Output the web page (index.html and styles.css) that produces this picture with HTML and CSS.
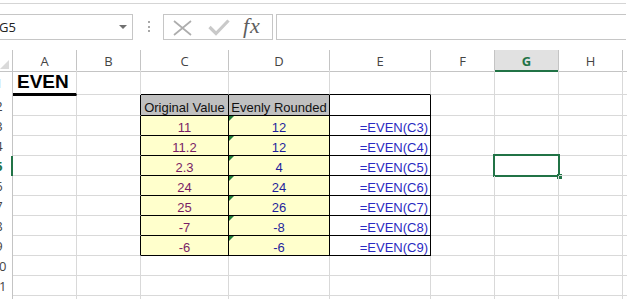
FILE: index.html
```html
<!DOCTYPE html>
<html lang="en">

<head>
    <meta charset="UTF-8" />
    <title>EVEN - Excel</title>
    <link rel="stylesheet" href="styles.css">
</head>

<body>
    <div class="ribbon-edge"></div>

    <!-- name box + formula bar -->
    <div class="formula-bar">
        <div class="name-box">
            <span class="name-ref">G5</span>
            <span class="name-arrow"></span>
        </div>
        <div class="grip">
            <svg width="3" height="12" viewBox="0 0 3 12">
                <rect x="0" y="0" width="2" height="2" fill="#a8a8a8" />
                <rect x="0" y="5" width="2" height="2" fill="#a8a8a8" />
                <rect x="0" y="9" width="2" height="2" fill="#a8a8a8" />
            </svg>
        </div>
        <div class="fx-buttons">
            <svg class="btn-cancel" width="19" height="16" viewBox="0 0 19 16">
                <path d="M1 1 L18 15 M18 1 L1 15" stroke="#adadad" stroke-width="1.7" fill="none" />
            </svg>
            <svg class="btn-enter" width="22" height="17" viewBox="0 0 22 17">
                <path d="M1.5 8 L8 14.5 L20.5 1.5" stroke="#c9c9c9" stroke-width="3.2" fill="none" />
            </svg>
            <span class="fx">fx</span>
        </div>
        <div class="formula-input"></div>
    </div>

    <!-- sheet -->
    <div class="sheet">
        <div class="row head">
            <div class="corner"><span class="corner-tri"></span></div>
            <div class="ch">A</div>
            <div class="ch">B</div>
            <div class="ch">C</div>
            <div class="ch">D</div>
            <div class="ch">E</div>
            <div class="ch">F</div>
            <div class="ch sel">G</div>
            <div class="ch">H</div>
            <div class="ch end"></div>
        </div>

        <div class="row r1">
            <div class="rh"><span>1</span></div>
            <div class="c title">EVEN</div>
            <div class="c"></div>
            <div class="c tt"></div>
            <div class="c tt"></div>
            <div class="c tt"></div>
            <div class="c"></div>
            <div class="c"></div>
            <div class="c"></div>
            <div class="c end"></div>
        </div>

        <div class="row r2">
            <div class="rh"><span>2</span></div>
            <div class="c under-title"></div>
            <div class="c tl"></div>
            <div class="c tb hdr">Original Value</div>
            <div class="c tb hdr">Evenly Rounded</div>
            <div class="c tb"></div>
            <div class="c"></div>
            <div class="c"></div>
            <div class="c"></div>
            <div class="c end"></div>
        </div>

        <div class="row">
            <div class="rh"><span>3</span></div>
            <div class="c"></div>
            <div class="c tl"></div>
            <div class="c tb val">11</div>
            <div class="c tb res">12</div>
            <div class="c tb fml">=EVEN(C3)</div>
            <div class="c"></div>
            <div class="c"></div>
            <div class="c"></div>
            <div class="c end"></div>
        </div>

        <div class="row">
            <div class="rh"><span>4</span></div>
            <div class="c"></div>
            <div class="c tl"></div>
            <div class="c tb val">11.2</div>
            <div class="c tb res">12</div>
            <div class="c tb fml">=EVEN(C4)</div>
            <div class="c"></div>
            <div class="c"></div>
            <div class="c"></div>
            <div class="c end"></div>
        </div>

        <div class="row">
            <div class="rh active"><span>5</span></div>
            <div class="c"></div>
            <div class="c tl"></div>
            <div class="c tb val">2.3</div>
            <div class="c tb res">4</div>
            <div class="c tb fml">=EVEN(C5)</div>
            <div class="c"></div>
            <div class="c current"><span class="cursor"><span class="handle"></span></span></div>
            <div class="c"></div>
            <div class="c end"></div>
        </div>

        <div class="row">
            <div class="rh"><span>6</span></div>
            <div class="c"></div>
            <div class="c tl"></div>
            <div class="c tb val">24</div>
            <div class="c tb res">24</div>
            <div class="c tb fml">=EVEN(C6)</div>
            <div class="c"></div>
            <div class="c"></div>
            <div class="c"></div>
            <div class="c end"></div>
        </div>

        <div class="row">
            <div class="rh"><span>7</span></div>
            <div class="c"></div>
            <div class="c tl"></div>
            <div class="c tb val">25</div>
            <div class="c tb res">26</div>
            <div class="c tb fml">=EVEN(C7)</div>
            <div class="c"></div>
            <div class="c"></div>
            <div class="c"></div>
            <div class="c end"></div>
        </div>

        <div class="row">
            <div class="rh"><span>8</span></div>
            <div class="c"></div>
            <div class="c tl"></div>
            <div class="c tb val">-7</div>
            <div class="c tb res">-8</div>
            <div class="c tb fml">=EVEN(C8)</div>
            <div class="c"></div>
            <div class="c"></div>
            <div class="c"></div>
            <div class="c end"></div>
        </div>

        <div class="row">
            <div class="rh"><span>9</span></div>
            <div class="c"></div>
            <div class="c tl"></div>
            <div class="c tb val">-6</div>
            <div class="c tb res">-6</div>
            <div class="c tb fml">=EVEN(C9)</div>
            <div class="c"></div>
            <div class="c"></div>
            <div class="c"></div>
            <div class="c end"></div>
        </div>

        <div class="row">
            <div class="rh"><span>10</span></div>
            <div class="c"></div>
            <div class="c"></div>
            <div class="c"></div>
            <div class="c"></div>
            <div class="c"></div>
            <div class="c"></div>
            <div class="c"></div>
            <div class="c"></div>
            <div class="c end"></div>
        </div>

        <div class="row">
            <div class="rh"><span>11</span></div>
            <div class="c"></div>
            <div class="c"></div>
            <div class="c"></div>
            <div class="c"></div>
            <div class="c"></div>
            <div class="c"></div>
            <div class="c"></div>
            <div class="c"></div>
            <div class="c end"></div>
        </div>

        <div class="row last">
            <div class="rh"></div>
            <div class="c"></div>
            <div class="c"></div>
            <div class="c"></div>
            <div class="c"></div>
            <div class="c"></div>
            <div class="c"></div>
            <div class="c"></div>
            <div class="c"></div>
            <div class="c end"></div>
        </div>
    </div>
</body>

</html>
```

FILE: styles.css
```css
:root {
    --grid: #d9d9d9;
    --head-line: #c4c4c4;
    --excel-green: #217346;
    --cols: 13px 64px 64px 88px 101px 101px 64px 64px 64px 4px;
}

* {
    box-sizing: border-box;
}

body {
    margin: 0;
    background: #fff;
    font-family: "Liberation Sans", Arial, sans-serif;
    overflow: hidden;
    height: 299px;
}

.ribbon-edge {
    height: 4px;
    width: 626px;
    border-bottom: 1px solid #d5d5d5;
}

/* ---- formula bar ---- */
.formula-bar {
    display: flex;
    margin-top: 10px;
    height: 26px;
    width: 626px;
}

.name-box {
    width: 133px;
    border: 1px solid #c6c6c6;
    border-left: none;
    display: flex;
    align-items: center;
    justify-content: space-between;
    padding-right: 4px;
    font-family: "Open Sans", "Noto Sans", sans-serif;
    font-size: 13px;
    color: #222;
}

.name-ref {
    margin-left: -1px;
}

.name-arrow {
    width: 0;
    height: 0;
    border-left: 4px solid transparent;
    border-right: 4px solid transparent;
    border-top: 4px solid #707070;
    margin-right: 1px;
}

.grip {
    width: 30px;
    display: flex;
    align-items: center;
    justify-content: center;
    padding-left: 2px;
}

.fx-buttons {
    width: 110px;
    border: 1px solid #c6c6c6;
    display: flex;
    align-items: center;
    padding-left: 9px;
}

.btn-cancel {
    margin-top: 1px;
}

.btn-enter {
    margin-left: 16px;
}

.fx {
    margin-left: 13px;
    font-family: "Liberation Serif", "Times New Roman", serif;
    font-style: italic;
    font-size: 22px;
    color: #5e5e5e;
    letter-spacing: 1px;
    line-height: 22px;
    margin-top: -2px;
}

.formula-input {
    flex: 1;
    margin-left: 3px;
    border-top: 1px solid #c6c6c6;
    border-bottom: 1px solid #c6c6c6;
    border-left: 1px solid #c6c6c6;
}

/* ---- sheet grid ---- */
.sheet {
    margin-top: 10px;
    width: 627px;
}

.row {
    display: grid;
    grid-template-columns: var(--cols);
    height: 20px;
}

.row.r1 {
    height: 25px;
}

.row.r2 {
    height: 21px;
}

.row.last {
    height: 4px;
}

.c {
    border-right: 1px solid var(--grid);
    border-bottom: 1px solid var(--grid);
    display: flex;
    align-items: flex-end;
    justify-content: center;
    font-size: 13px;
    line-height: 15px;
    white-space: nowrap;
    position: relative;
}

.row.last .c {
    border-bottom: none;
}

.c.end {
    border-right: none;
}

/* headers */
.head .ch,
.corner {
    border-right: 1px solid var(--head-line);
    border-bottom: 1px solid var(--head-line);
    display: flex;
    align-items: center;
    justify-content: center;
    font-family: "Open Sans", "Noto Sans", sans-serif;
    font-size: 13px;
    color: #444;
    padding-top: 1px;
}

.head .ch.end {
    border-right: none;
}

.head .ch.sel {
    background: #e1e1e1;
    border-bottom: 2px solid var(--excel-green);
    color: var(--excel-green);
    font-weight: bold;
    padding-top: 2px;
}

.corner {
    align-items: flex-end;
    justify-content: flex-end;
    padding: 0 3px 2px 0;
}

.corner-tri {
    width: 0;
    height: 0;
    border-left: 9px solid transparent;
    border-bottom: 9px solid #dadada;
}

.rh {
    border-right: 1px solid var(--head-line);
    display: flex;
    align-items: center;
    overflow: hidden;
    font-family: "Open Sans", "Noto Sans", sans-serif;
    font-size: 13px;
    color: #444;
}

.rh span {
    flex: none;
    width: 26px;
    margin-left: -14px;
    text-align: center;
}

.rh.active {
    border-right: 2px solid var(--excel-green);
    color: var(--excel-green);
    font-weight: bold;
}

/* title */
.c.title {
    justify-content: flex-start;
    padding-left: 4px;
    font-size: 19px;
    font-weight: bold;
    line-height: 22px;
    border-bottom: 2px solid #000;
}

.c.under-title {
    border-top: 1px solid #000;
}

/* table borders */
.c.tt {
    border-bottom-color: #000;
}

.c.tl {
    border-right-color: #000;
}

.c.tb {
    border-right-color: #000;
    border-bottom-color: #000;
}

.c.hdr {
    background: #c0c0c0;
    color: #111;
}

.c.val {
    background: #ffffcc;
    color: #7a1e66;
}

.c.res {
    background: #ffffcc;
    color: #1f1f9c;
}

.c.res::before {
    content: '';
    position: absolute;
    top: 0;
    left: 0;
    border-top: 5px solid #1e7a3a;
    border-right: 5px solid transparent;
}

.c.fml {
    justify-content: flex-end;
    padding-right: 2px;
    color: #2a2ac2;
}

/* active cell */
.cursor {
    position: absolute;
    top: -2px;
    left: -2px;
    width: 67px;
    height: 23px;
    border: 2px solid var(--excel-green);
}

.handle {
    position: absolute;
    right: -4px;
    bottom: -4px;
    width: 5px;
    height: 5px;
    background: var(--excel-green);
}
```
